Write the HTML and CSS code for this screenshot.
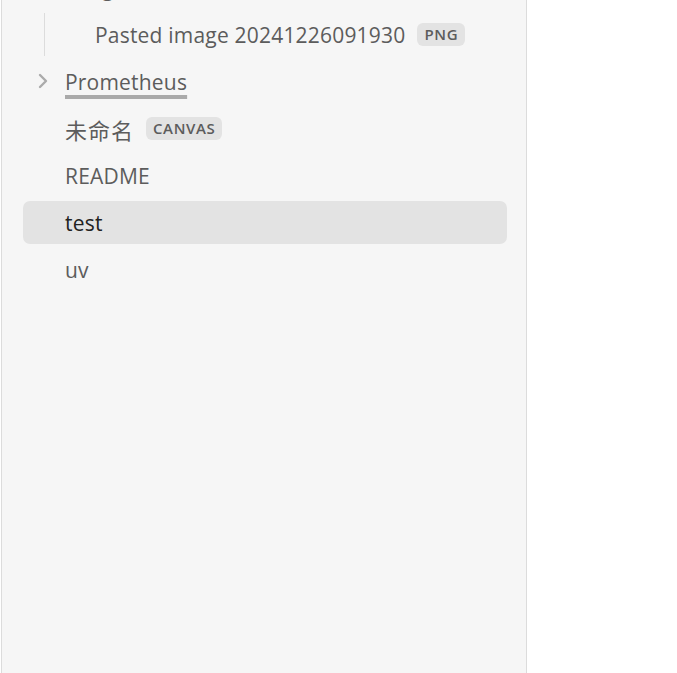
FILE: index.html
```html
<!DOCTYPE html>
<html>
<head>
<meta charset="utf-8">
<link rel="stylesheet" href="styles.css">
</head>
<body>
<div class="app">
  <div class="sidebar">
    <div class="tree">
      <div class="row"><span class="label">images</span></div>
      <div class="children">
        <div class="row nested"><span class="label">Pasted image 20241226091930</span><span class="badge">PNG</span></div>
      </div>
      <div class="row">
        <svg class="chev" width="12" height="16" viewBox="0 0 12 16"><path d="M3 2 L9 8 L3 14" fill="none" stroke="#ababab" stroke-width="2.4" stroke-linecap="round" stroke-linejoin="round"/></svg>
        <span class="label link">Prometheus</span>
      </div>
      <div class="row"><span class="label cjk">未命名</span><span class="badge">CANVAS</span></div>
      <div class="row"><span class="label">README</span></div>
      <div class="row active"><span class="label">test</span></div>
      <div class="row"><span class="label">uv</span></div>
    </div>
  </div>
  <div class="main"></div>
</div>
</body>
</html>
```
FILE: styles.css
```css
html, body {
  margin: 0;
  padding: 0;
  height: 100%;
  background: #ffffff;
  overflow: hidden;
}
.app {
  display: flex;
  height: 673px;
  font-family: "Open Sans", "Noto Sans CJK SC", sans-serif;
}
.sidebar {
  margin-left: 1px;
  width: 524px;
  background: #f6f6f6;
  border-left: 1px solid #dcdcdc;
  border-right: 1px solid #dcdcdc;
  overflow: hidden;
}
.main {
  flex: 1;
  background: #ffffff;
}
.tree {
  margin-top: -34px;
  padding: 0 19px 0 21px;
}
.row {
  position: relative;
  display: flex;
  align-items: center;
  height: 43px;
  margin-bottom: 4px;
  padding-left: 42px;
  border-radius: 7px;
  color: #5c5c5c;
  font-size: 21px;
}
.children {
  margin-left: 21px;
  border-left: 1px solid #dcdcdc;
}
.row.nested {
  padding-left: 50px;
}
.label {
  white-space: nowrap;
  letter-spacing: 0.2px;
}
.cjk {
  font-size: 22px;
  letter-spacing: 1px;
}
.chev {
  position: absolute;
  left: 14px;
  top: 13px;
}
.link {
  text-decoration: underline;
  text-decoration-color: #aaaaaa;
  text-decoration-thickness: 4px;
  text-underline-offset: 5px;
}
.badge {
  margin-left: 12px;
  padding: 1px 7px;
  line-height: 21px;
  background: #e3e3e3;
  border-radius: 6px;
  font-size: 15px;
  font-weight: 600;
  letter-spacing: 0.6px;
  color: #5c5c5c;
}
.row.active {
  background: #e3e3e3;
  color: #222222;
}
```
